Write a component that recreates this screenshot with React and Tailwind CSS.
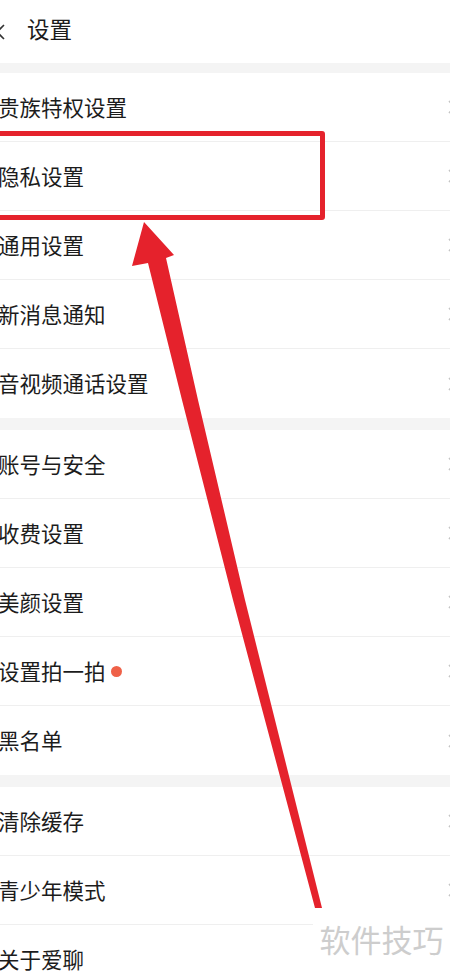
import React from "react";

const groups = [
  ["贵族特权设置", "隐私设置", "通用设置", "新消息通知", "音视频通话设置"],
  ["账号与安全", "收费设置", "美颜设置", "设置拍一拍", "黑名单"],
  ["清除缓存", "青少年模式", "关于爱聊"],
];

function Chevron() {
  return (
    <svg width="12" height="16" viewBox="0 0 12 16" className="mr-[-9px] shrink-0">
      <path d="M2 2 L8 8 L2 14" fill="none" stroke="#c4c4c4" strokeWidth="1.6" />
    </svg>
  );
}

function Row({ label, last }) {
  return (
    <div
      className={
        "h-[69px] flex items-center justify-between bg-white " +
        (last ? "" : "border-b border-[#efefef]")
      }
    >
      <div className="flex items-center ml-[-2px]">
        <span className="text-[21.5px] text-[#1c1c1c]">{label}</span>
        {label === "设置拍一拍" && (
          <span className="ml-[5px] w-[11px] h-[11px] rounded-full bg-[#ef6148]" />
        )}
      </div>
      <Chevron />
    </div>
  );
}

export default function App() {
  return (
    <div
      className="relative w-[450px] h-[975px] overflow-hidden bg-white"
      style={{ fontFamily: '"Noto Sans CJK SC", "Noto Sans", sans-serif' }}
    >
      <div className="h-[63px] flex items-center">
        <svg width="14" height="18" viewBox="0 0 14 18" className="ml-[-8px]">
          <path d="M12 2 L5 9 L12 16" fill="none" stroke="#333" strokeWidth="1.6" />
        </svg>
        <span className="ml-[21px] text-[22.5px] text-[#1c1c1c] mt-[-6px]">设置</span>
      </div>
      <div className="h-[10px] bg-[#f4f4f4]" />
      {groups[0].map((l, i) => (
        <Row key={l} label={l} last={i === groups[0].length - 1} />
      ))}
      <div className="h-[12px] bg-[#f4f4f4]" />
      {groups[1].map((l, i) => (
        <Row key={l} label={l} last={i === groups[1].length - 1} />
      ))}
      <div className="h-[12px] bg-[#f4f4f4]" />
      {groups[2].map((l, i) => (
        <Row key={l} label={l} last={i === groups[2].length - 1} />
      ))}

      {/* annotation */}
      <div className="absolute left-[-6px] top-[131px] w-[331px] h-[89px] border-[5px] border-[#e5222c] rounded-[3px]" />
      <svg className="absolute left-0 top-0" width="450" height="975" viewBox="0 0 450 975">
        <polygon
          points="144,222 174,255 166,258 198,400 245,600 322,908 315,908 233,600 182,400 148,263 132,266"
          fill="#e5222c"
        />
      </svg>

      <div className="absolute left-[313px] top-[908px] w-[137px] h-[67px] bg-white flex items-center justify-center">
        <span className="text-[31px] text-[#cdcdcd] mt-[-4px]">软件技巧</span>
      </div>
    </div>
  );
}
